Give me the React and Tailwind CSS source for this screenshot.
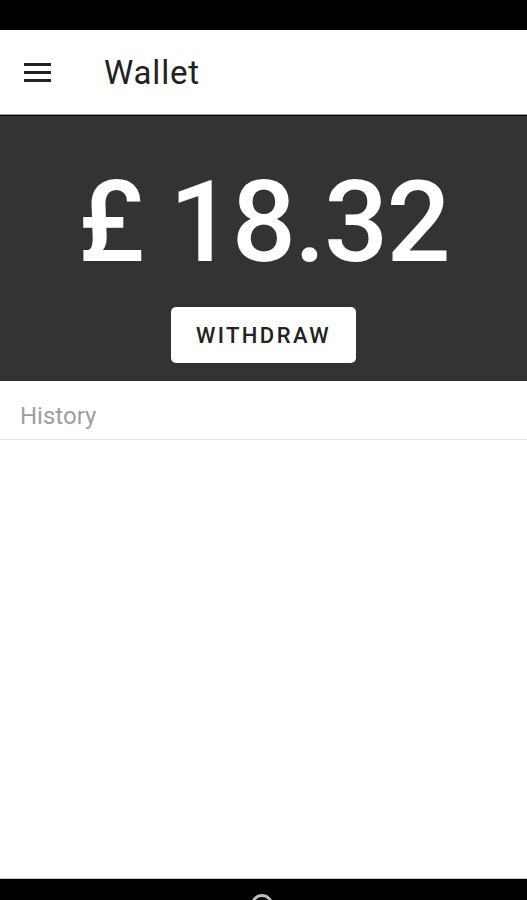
export default function App() {
  return (
    <div
      className="flex h-[900px] w-[527px] flex-col overflow-hidden bg-white"
      style={{ fontFamily: "Roboto, 'Noto Sans', sans-serif" }}
    >
      {/* Status bar */}
      <div className="h-[30px] shrink-0 bg-black" />

      {/* Toolbar */}
      <header className="flex h-[84px] shrink-0 items-center">
        <button className="ml-6 flex h-[26px] w-[28px] flex-col justify-center gap-[5px]">
          <span className="block h-[3px] w-[27px] bg-[#222]" />
          <span className="block h-[3px] w-[27px] bg-[#222]" />
          <span className="block h-[3px] w-[27px] bg-[#222]" />
        </button>
        <h1 className="ml-[52px] text-[33px] leading-none tracking-[0.025em] text-[#212121]">Wallet</h1>
      </header>
      <div className="h-px shrink-0 bg-[#9a9a9a]" />
      <div className="h-px shrink-0 bg-black" />

      {/* Balance */}
      <section className="flex h-[265px] shrink-0 flex-col items-center bg-[#333333] pt-[49px]">
        <div className="text-[113px] font-medium leading-[115px] tracking-[-0.015em] text-white">£ 18.32</div>
        <button className="mt-[27px] flex h-[56px] w-[185px] items-center justify-center rounded-[5px] bg-white text-[22px] font-medium tracking-[0.11em] text-[#222]">
          WITHDRAW
        </button>
      </section>

      {/* History header */}
      <div className="flex h-[59px] shrink-0 items-center border-b border-[#e3e3e3] px-5 pt-[11px]">
        <span className="text-[24px] text-[#9e9e9e]">History</span>
      </div>

      <div className="flex-1" />

      {/* Nav bar */}
      <div className="h-px shrink-0 bg-[#c8c8c8]" />
      <div className="relative h-[21px] shrink-0 overflow-hidden bg-black">
        <div className="absolute left-[251px] top-[15px] h-[22px] w-[22px] rounded-full border-[3px] border-[#bdbdbd]" />
      </div>
    </div>
  );
}
